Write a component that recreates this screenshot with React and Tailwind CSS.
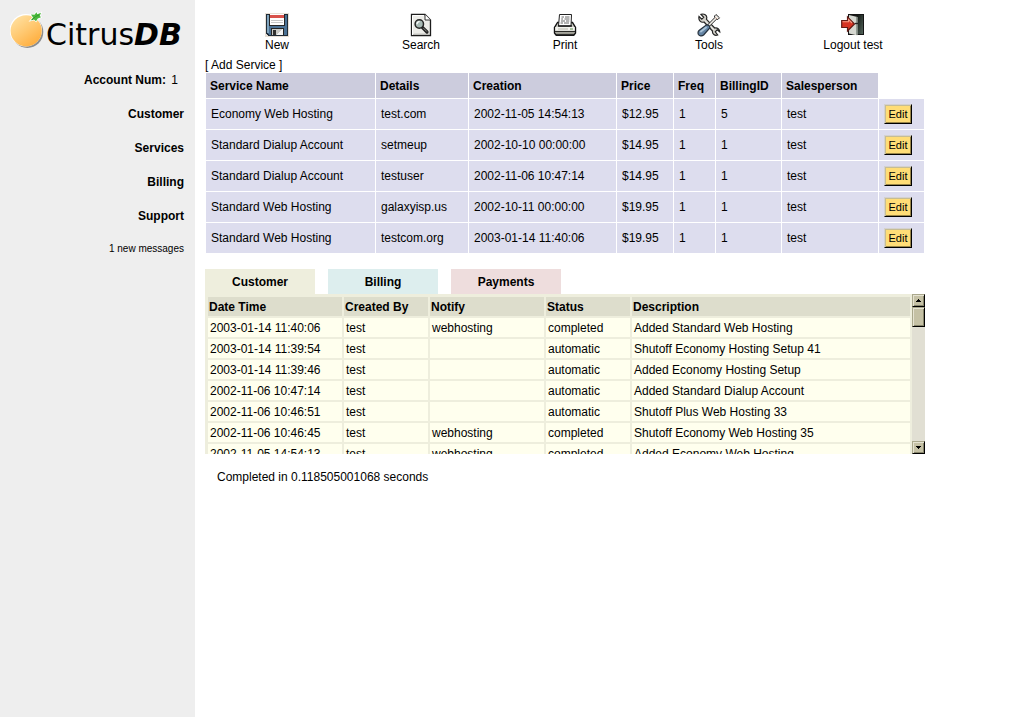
import React, { useRef, useState } from "react";

const services = [
  ["Economy Web Hosting", "test.com", "2002-11-05 14:54:13", "$12.95", "1", "5", "test"],
  ["Standard Dialup Account", "setmeup", "2002-10-10 00:00:00", "$14.95", "1", "1", "test"],
  ["Standard Dialup Account", "testuser", "2002-11-06 10:47:14", "$14.95", "1", "1", "test"],
  ["Standard Web Hosting", "galaxyisp.us", "2002-10-11 00:00:00", "$19.95", "1", "1", "test"],
  ["Standard Web Hosting", "testcom.org", "2003-01-14 11:40:06", "$19.95", "1", "1", "test"],
];

const serviceHeads = [
  ["Service Name", "w-[169px]"],
  ["Details", "w-[92px]"],
  ["Creation", "w-[147px]"],
  ["Price", "w-[56px]"],
  ["Freq", "w-[41px]"],
  ["BillingID", "w-[65px]"],
  ["Salesperson", "w-[96px]"],
];

const historyHeads = [
  ["Date Time", "w-[134px]"],
  ["Created By", "w-[84px]"],
  ["Notify", "w-[114px]"],
  ["Status", "w-[84px]"],
  ["Description", ""],
];

const history = [
  ["2003-01-14 11:40:06", "test", "webhosting", "completed", "Added Standard Web Hosting"],
  ["2003-01-14 11:39:54", "test", "", "automatic", "Shutoff Economy Hosting Setup 41"],
  ["2003-01-14 11:39:46", "test", "", "automatic", "Added Economy Hosting Setup"],
  ["2002-11-06 10:47:14", "test", "", "automatic", "Added Standard Dialup Account"],
  ["2002-11-06 10:46:51", "test", "", "automatic", "Shutoff Plus Web Hosting 33"],
  ["2002-11-06 10:46:45", "test", "webhosting", "completed", "Shutoff Economy Web Hosting 35"],
  ["2002-11-05 14:54:13", "test", "webhosting", "completed", "Added Economy Web Hosting"],
];

function OrangeLogo() {
  return (
    <svg width="36" height="40" viewBox="0 0 36 40" aria-hidden="true">
      <defs>
        <linearGradient id="peel" x1="0.15" y1="0.05" x2="0.8" y2="0.95">
          <stop offset="0" stopColor="#ffe0a0" />
          <stop offset="0.5" stopColor="#ffc870" />
          <stop offset="1" stopColor="#ffad3c" />
        </linearGradient>
      </defs>
      <circle cx="17.4" cy="21" r="15.9" fill="#8d8d8d" />
      <circle cx="15.8" cy="19.2" r="16.2" fill="#fff" />
      <circle cx="16.2" cy="19.8" r="15.6" fill="url(#peel)" />
      <path d="M20.5 9.5 23 6.5 21 3.5 24.5 3.8 26.5 1.2 27.3 3.2 31 1.8 29.8 4.8 31 6.3 27.8 7.6 26 10.2 24 8.5Z" fill="#4bb83c" stroke="#fff" strokeWidth="1.4" paintOrder="stroke" />
      <path d="M22 9 25.5 5.5 29 4" fill="none" stroke="#329a2c" strokeWidth="1" />
    </svg>
  );
}

function NewIcon() {
  return (
    <svg width="24" height="24" viewBox="0 0 24 24" shapeRendering="crispEdges" aria-hidden="true">
      <rect width="24" height="24" fill="#e8e0d6" />
      <path d="M1 1H23V23H3L1 21Z" fill="#202c38" />
      <path d="M2 2H22V22H4L2 20Z" fill="#4b7194" />
      <path d="M2 2H4V20H2Z" fill="#7fa3bd" />
      <rect x="4" y="1" width="16" height="12" fill="#252525" />
      <rect x="5" y="1" width="14" height="11" fill="#fff" />
      <rect x="5" y="2" width="14" height="3" fill="#d9524b" />
      <path d="M6 7.5H18M6 9.5H18" stroke="#c9c9c9" />
      <rect x="6" y="15" width="13" height="7" fill="#252525" />
      <rect x="7" y="16" width="11" height="6" fill="#c9c9c5" />
      <rect x="8" y="17" width="3" height="5" fill="#303030" />
      <path d="M12 22 17 16H18V22Z" fill="#f3f3f3" />
    </svg>
  );
}

function SearchIcon() {
  return (
    <svg width="24" height="24" viewBox="0 0 24 24" aria-hidden="true">
      <path d="M2.5 1.5H16L21.5 7V22.5H2.5Z" fill="#ecece8" stroke="#1c1c1c" strokeWidth="1.3" />
      <path d="M3.5 22V2.5H15" fill="none" stroke="#fff" />
      <path d="M16 1.5V7H21.5" fill="#fff" stroke="#333" />
      <path d="M5 21H20.5V9" fill="none" stroke="#c6c6c2" />
      <path d="M13.3 14.3 18 19" stroke="#222" strokeWidth="3.2" strokeLinecap="round" />
      <path d="M14.5 15.2 17.8 18.5" stroke="#92928b" strokeWidth="1" />
      <circle cx="10.3" cy="11" r="4.2" fill="#a7b9b4" stroke="#252525" strokeWidth="1.5" />
      <path d="M8 11.3a2.4 2.4 0 0 1 2.6-2.6" fill="none" stroke="#fff" strokeWidth="1.3" />
    </svg>
  );
}

function PrintIcon() {
  return (
    <svg width="24" height="24" viewBox="0 0 24 24" aria-hidden="true">
      <path d="M4.5 9.5 1.5 14.5V20L3 22H21L22.5 20V14.5L19.5 9.5Z" fill="#c9c9c1" stroke="#111" strokeWidth="1.4" />
      <path d="M6.5 1.5H18.5L18 13H5.5Z" fill="#fff" stroke="#222" />
      <path d="M8.5 4H11M12 4H16.5M8.2 6H10M11.5 6H16.5M8 8H12M13 8H16.3M7.6 10H10M11 10H16" stroke="#6a6a6a" />
      <path d="M5 13H19" stroke="#111" strokeWidth="1.3" />
      <path d="M2.3 14H21.7V18H2.3Z" fill="#f3f3ee" />
      <path d="M2 18.5H22" stroke="#2c2c28" strokeWidth="1.2" />
      <path d="M5 16H15" stroke="#b9b8ae" />
      <path d="M17 16H20" stroke="#77a06b" strokeWidth="1.2" />
      <path d="M3 20.2H21" stroke="#96968c" strokeWidth="1.5" />
      <path d="M3 22.3H21" stroke="#111" strokeWidth="1.2" />
    </svg>
  );
}

function ToolsIcon() {
  return (
    <svg width="24" height="24" viewBox="0 0 24 24" aria-hidden="true">
      <path d="M2 3.5 4.8 6.2 6.7 4.3 4 1.4C6.8.3 9.5 1.8 9.8 4.3L9.5 6.3 17.7 15C20.3 14.3 22.8 16.2 22.8 19L20.2 16.9 18.3 18.8 20.7 21.9C17.8 23.2 15 20.8 15.5 18L7 9C4 10 1.2 7.3 2 3.5Z" fill="#d3d1ca" stroke="#252525" strokeWidth="1.2" />
      <path d="M8 7.5 16.8 16.7" stroke="#f4f4f0" strokeWidth="1" />
      <path d="M19 1.5 22.5 4.8 20.8 6.5 19.4 6.3 12.5 13.2 10.9 11.6 17.7 4.7 17.5 3Z" fill="#f1eee8" stroke="#292929" />
      <path d="M18.5 4.7 20 6" stroke="#b98b77" strokeWidth="1" />
      <path d="M9.3 12C11.6 11.6 13 13 12.8 15L6.6 22C4.8 23.5 2.2 23 1.3 21.2.8 19.8 1.1 18.4 2 17.5Z" fill="#6585a5" stroke="#26313c" strokeWidth="1.2" />
      <path d="M3.3 19 9.6 14" stroke="#aac4d9" strokeWidth="1.8" />
    </svg>
  );
}

function LogoutIcon() {
  return (
    <svg width="24" height="24" viewBox="0 0 24 24" aria-hidden="true">
      <defs>
        <linearGradient id="doorway" x1="0" y1="0" x2="1" y2="1">
          <stop offset="0" stopColor="#101411" />
          <stop offset="1" stopColor="#52645a" />
        </linearGradient>
      </defs>
      <rect x="7" y="1" width="16" height="21" fill="#151515" />
      <rect x="16" y="2" width="6" height="19" fill="url(#doorway)" />
      <path d="M8 2 16.5 4V22.5L8 20.5Z" fill="#d6d8d1" />
      <path d="M15.5 4V22" stroke="#929c92" />
      <path d="M14 10.5H17" stroke="#262626" strokeWidth="1.3" />
      <path d="M.7 7.5H6.5V4L13.5 11 6.5 18V14.5H.7Z" fill="#d63322" stroke="#611a14" strokeWidth="1.2" />
      <path d="M1.5 8.7H7.5V6.5L11 10" fill="none" stroke="#f59a84" strokeWidth="1.1" />
    </svg>
  );
}

const tools = [
  ["New", NewIcon],
  ["Search", SearchIcon],
  ["Print", PrintIcon],
  ["Tools", ToolsIcon],
  ["Logout test", LogoutIcon],
];

const bevel =
  "w-full shrink-0 border border-t-[#aaa88c] border-l-[#aaa88c] border-r-black border-b-black bg-[#c5c1a5] shadow-[inset_1px_1px_0_#e6e3d2,inset_-1px_-1px_0_#88866c]";

function HistoryPanel() {
  const pane = useRef(null);
  const scroll = (amount) => pane.current.scrollBy({ top: amount });
  return (
    <section className="flex h-40 bg-[#eeeedd]" aria-label="Customer history">
      <div ref={pane} className="min-w-0 flex-1 overflow-hidden pl-px pt-px">
        <table className="w-full table-fixed border-separate border-spacing-[2px] text-left">
          <thead>
            <tr className="h-[19px] bg-[#ddddcc]">
              {historyHeads.map(([name, width]) => (
                <th key={name} scope="col" className={`px-px py-0 font-bold ${width}`}>{name}</th>
              ))}
            </tr>
          </thead>
          <tbody>
            {history.map((row) => (
              <tr key={row[0]} className="h-[19px] bg-[#ffffee]">
                {row.map((value, i) => (
                  <td key={i} className="whitespace-nowrap px-0.5 py-0">{value}</td>
                ))}
              </tr>
            ))}
          </tbody>
        </table>
      </div>
      <div className="flex w-[13px] flex-col bg-[#e1dfd3]">
        <button type="button" aria-label="Scroll up" onClick={() => scroll(-21)} className={`${bevel} flex h-[13px] items-center justify-center`}>
          <svg width="5" height="3" viewBox="0 0 5 3" shapeRendering="crispEdges"><path d="M2 0H3V1H4V2H5V3H0V2H1V1H2Z" /></svg>
        </button>
        <div className={`${bevel} h-5`} />
        <div className="flex-1" />
        <button type="button" aria-label="Scroll down" onClick={() => scroll(21)} className={`${bevel} flex h-[13px] items-center justify-center`}>
          <svg width="5" height="3" viewBox="0 0 5 3" shapeRendering="crispEdges"><path d="M0 0H5V1H4V2H3V3H2V2H1V1H0Z" /></svg>
        </button>
      </div>
    </section>
  );
}

const tabs = [
  ["Customer", "bg-[#eeeedd]"],
  ["Billing", "bg-[#ddeeee]"],
  ["Payments", "bg-[#eedddd]"],
];

export default function App() {
  const [active, setActive] = useState("Customer");
  return (
    <div className="flex min-h-screen bg-white font-['Liberation_Sans',Arial,sans-serif] text-[12px] leading-4 text-black">
      <aside className="w-[195px] shrink-0 bg-[#eeeeee]">
        <a href="#home" className="flex items-start pl-2.5 pt-[11px] font-['DejaVu_Sans',Verdana,sans-serif] text-[30px] leading-[48px]">
          <OrangeLogo />
          <span>Citrus<b className="italic">DB</b></span>
        </a>
        <div className="flex flex-col items-end gap-[18px] pr-[11px] pt-[13px] font-bold">
          <p className="pr-1.5">Account Num: <span className="pl-0.5 font-normal">1</span></p>
          <a href="#customer">Customer</a>
          <a href="#services">Services</a>
          <a href="#billing">Billing</a>
          <a href="#support">Support</a>
          <a href="#messages" className="text-[10px] font-normal leading-[14px]">1 new messages</a>
        </div>
      </aside>
      <main className="min-w-0 max-w-[740px] flex-1 px-2.5 pt-[13px]">
        <nav className="grid grid-cols-5">
          {tools.map(([name, Icon]) => (
            <a key={name} href={`#${name.split(" ")[0].toLowerCase()}`} className="flex flex-col items-center">
              <Icon />
              {name}
            </a>
          ))}
        </nav>
        <div className="pt-[5px] leading-[14px]">[ <a href="#add-service">Add Service</a> ]</div>
        <table className="w-full table-fixed border-separate border-spacing-px text-left">
          <thead>
            <tr className="h-[25px]">
              {serviceHeads.map(([name, width]) => (
                <th key={name} scope="col" className={`bg-[#ccccdd] px-1 py-0 font-bold ${width}`}>{name}</th>
              ))}
              <td className="w-[45px] p-0" />
            </tr>
          </thead>
          <tbody>
            {services.map((row) => (
              <tr key={row[0] + row[2]} className="h-[30px] bg-[#ddddee]">
                {row.map((value, i) => (
                  <td key={i} className="whitespace-nowrap px-[5px] py-0">{value}</td>
                ))}
                <td className="px-[5px] py-0">
                  <button type="button" className="block h-5 w-7 border border-t-[#d5d2cf] border-l-[#d5d2cf] border-r-black border-b-black bg-[#ffdd77] text-center text-[11px] leading-4 shadow-[inset_1px_1px_0_#c6bd94,inset_-1px_-1px_0_#998547]">Edit</button>
                </td>
              </tr>
            ))}
          </tbody>
        </table>
        <div role="tablist" className="mt-[15px] flex gap-[13px] font-bold">
          {tabs.map(([name, color]) => (
            <button key={name} type="button" role="tab" aria-selected={active === name} onClick={() => setActive(name)} className={`h-[25px] w-[110px] ${color}`}>{name}</button>
          ))}
        </div>
        <HistoryPanel />
        <p className="px-3 pt-[15px]">Completed in 0.118505001068 seconds</p>
      </main>
    </div>
  );
}
